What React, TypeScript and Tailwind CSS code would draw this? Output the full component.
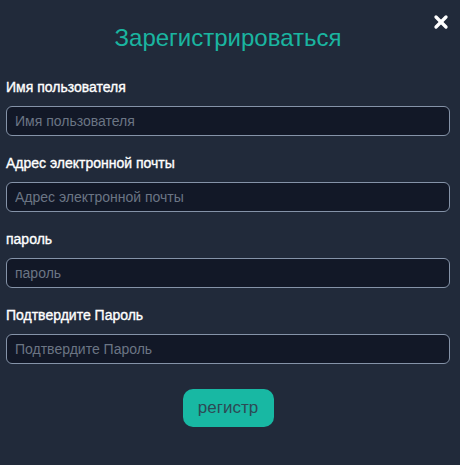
import { X } from 'lucide-react';

const fields = [
    'Имя пользователя',
    'Адрес электронной почты',
    'пароль',
    'Подтвердите Пароль',
];

export default function App() {
    return (
        <div className="w-[460px] h-[465px] bg-[#212a3a] font-['Liberation_Sans',Arial,sans-serif] relative">
            <button className="absolute top-[12px] right-[9px] text-white">
                <X size={20} strokeWidth={4} />
            </button>
            <div className="pl-[6px] pr-[10px] pt-[24px]">
                <h2 className="text-center text-[24px] leading-[28px] text-[#1ab5a0] mb-[27px]">Зарегистрироваться</h2>
                <div className="flex flex-col gap-[19px]">
                    {fields.map((f) => (
                        <div key={f} className="flex flex-col">
                            <label className="text-[14px] leading-[16px] font-medium text-white [-webkit-text-stroke:0.35px_white] mb-[11px]">{f}</label>
                            <input
                                placeholder={f}
                                className="h-[30px] w-full rounded-[6px] border border-[#8593a8] bg-[#121827] px-[8px] text-[14px] text-white placeholder:text-[#6b7584] outline-none"
                            />
                        </div>
                    ))}
                </div>
                <div className="flex justify-center mt-[25px]">
                    <button className="w-[91px] h-[38px] rounded-[10px] bg-[#18b8a3] text-[#2d4a55] text-[17px]">регистр</button>
                </div>
            </div>
        </div>
    );
}
